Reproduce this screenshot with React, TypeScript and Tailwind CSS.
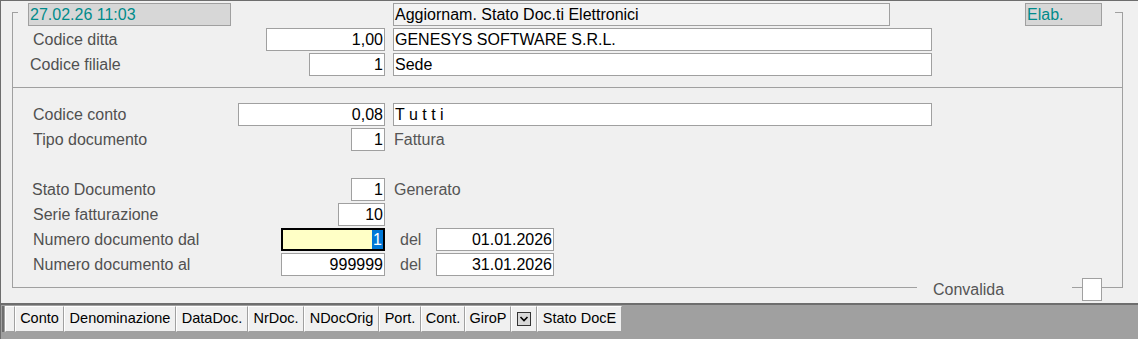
import type { ReactNode } from "react";

function Field({ className, children, left }: { className: string; children?: ReactNode; left?: boolean }) {
  return (
    <div
      className={`flex h-[23px] shrink-0 items-center border border-[#a0a0a0] bg-white text-[16px] leading-none text-black ${
        left ? "justify-start pl-[1px]" : "justify-end pr-[1px]"
      } ${className}`}
    >
      {children}
    </div>
  );
}

function Row({ label, pad, input, children }: { label: string; pad: string; input: ReactNode; children?: ReactNode }) {
  return (
    <div className="mt-[2px] flex h-[23px] shrink-0 items-center">
      <div className="flex w-[372px] items-center justify-between">
        <span className={`${pad} text-[16px] text-[#505050]`}>{label}</span>
        {input}
      </div>
      {children}
    </div>
  );
}

const tabs: [string, string][] = [
  ["Conto", "w-[49px]"],
  ["Denominazione", "w-[112px]"],
  ["DataDoc.", "w-[72px]"],
  ["NrDoc.", "w-[56px]"],
  ["NDocOrig", "w-[75px]"],
  ["Port.", "w-[42px]"],
  ["Cont.", "w-[44px]"],
  ["GiroP", "w-[46px]"],
];

const cell =
  "flex h-[26px] shrink-0 items-center justify-center border border-t-white border-l-white border-r-[#a0a0a0] border-b-[#a0a0a0] bg-[#f0f0f0] text-[14.5px] text-black";

export default function App() {
  return (
    <div className="flex h-[339px] w-[1138px] flex-col overflow-hidden border-l border-[#6e6e6e] bg-[#f0f0f0] font-['Liberation_Sans',Arial,sans-serif]">
      <div className="h-[303px] shrink-0 border-t border-[#6e6e6e]">
        <div className="relative ml-[11px] mt-[11px] flex h-[276px] w-[1111px] flex-col border-x border-[#a0a0a0]">
          {/* angoli del riquadro */}
          <span className="absolute left-0 top-0 h-px w-[5px] bg-[#a0a0a0]" />
          <span className="absolute right-0 top-0 h-px w-[7px] bg-[#a0a0a0]" />

          <div className="-mt-[9px] flex h-[23px] shrink-0 items-center">
            <div className="ml-[15px] flex h-[23px] w-[203px] items-center border border-[#a0a0a0] bg-[#d7d7d7] pl-[1px] text-[16px] text-[#008b8b]">
              27.02.26 11:03
            </div>
            <div className="ml-[162px] flex h-[23px] w-[497px] items-center border border-[#a0a0a0] bg-[#f3f3f3] pl-[1px] text-[16px] text-black">
              Aggiornam. Stato Doc.ti Elettronici
            </div>
            <div className="ml-[135px] flex h-[23px] w-[77px] items-center border border-[#a0a0a0] bg-[#d7d7d7] pl-[1px] text-[16px] text-[#008b8b]">
              Elab.
            </div>
          </div>

          <Row label="Codice ditta" pad="pl-[20px]" input={<Field className="w-[119px]">1,00</Field>}>
            <Field left className="ml-[8px] w-[539px]">GENESYS SOFTWARE S.R.L.</Field>
          </Row>
          <Row label="Codice filiale" pad="pl-[17px]" input={<Field className="w-[76px]">1</Field>}>
            <Field left className="ml-[8px] w-[539px]">Sede</Field>
          </Row>

          <div className="mt-[11px] h-px shrink-0 bg-[#a0a0a0]" />

          <div className="mt-[13px]" />
          <Row label="Codice conto" pad="pl-[20px]" input={<Field className="w-[147px]">0,08</Field>}>
            <Field left className="ml-[8px] w-[539px]">T u t t i</Field>
          </Row>
          <Row label="Tipo documento" pad="pl-[20px]" input={<Field className="w-[34px]">1</Field>}>
            <span className="ml-[9px] text-[16px] text-[#555]">Fattura</span>
          </Row>

          <div className="mt-[25px]" />
          <Row label="Stato Documento" pad="pl-[19px]" input={<Field className="w-[34px]">1</Field>}>
            <span className="ml-[9px] text-[16px] text-[#555]">Generato</span>
          </Row>
          <Row label="Serie fatturazione" pad="pl-[20px]" input={<Field className="w-[47px]">10</Field>} />
          <Row
            label="Numero documento dal"
            pad="pl-[20px]"
            input={
              <div className="flex h-[23px] w-[104px] shrink-0 items-stretch justify-end border-2 border-black bg-[#ffffc6] text-[16px] text-black">
                <span className="flex items-center bg-[#0078d7] px-[1px] text-white">1</span>
              </div>
            }
          >
            <span className="ml-[15px] w-[36px] text-[16px] text-[#555]">del</span>
            <Field className="w-[118px]">01.01.2026</Field>
          </Row>
          <Row label="Numero documento al" pad="pl-[20px]" input={<Field className="w-[104px]">999999</Field>}>
            <span className="ml-[15px] w-[36px] text-[16px] text-[#555]">del</span>
            <Field className="w-[118px]">31.01.2026</Field>
          </Row>

          <div className="mt-[2px] flex h-[23px] shrink-0 items-start">
            <div className="mt-[9px] h-px w-[904px] bg-[#a0a0a0]" />
            <span className="w-[155px] pl-[16px] text-[16px] text-[#555]">Convalida</span>
            <div className="mt-[9px] h-px w-[10px] bg-[#a0a0a0]" />
            <div className="h-[23px] w-[20px] border border-[#a0a0a0] bg-white" />
            <div className="mt-[9px] h-px flex-1 bg-[#a0a0a0]" />
          </div>
        </div>
      </div>

      <div className="flex-1 border-t-2 border-[#6e6e6e] bg-[#a0a0a0] pl-[1px] pt-[1px]">
        <div className="flex border-l-2 border-[#6e6e6e] pl-[1px]">
          <div className={`${cell} w-[10px]`} />
          {tabs.map(([t, w]) => (
            <div key={t} className={`${cell} ${w}`}>
              {t}
            </div>
          ))}
          <div className={`${cell} w-[26px]`}>
            <div className="flex h-[14px] w-[14px] items-center justify-center border border-[#333] bg-[#d8d8d8]">
              <svg width="10" height="8" viewBox="0 0 10 8">
                <path d="M1.5 2 L5 5.5 L8.5 2" stroke="#000" strokeWidth="1.6" fill="none" />
              </svg>
            </div>
          </div>
          <div className={`${cell} w-[85px]`}>Stato DocE</div>
        </div>
      </div>
    </div>
  );
}
